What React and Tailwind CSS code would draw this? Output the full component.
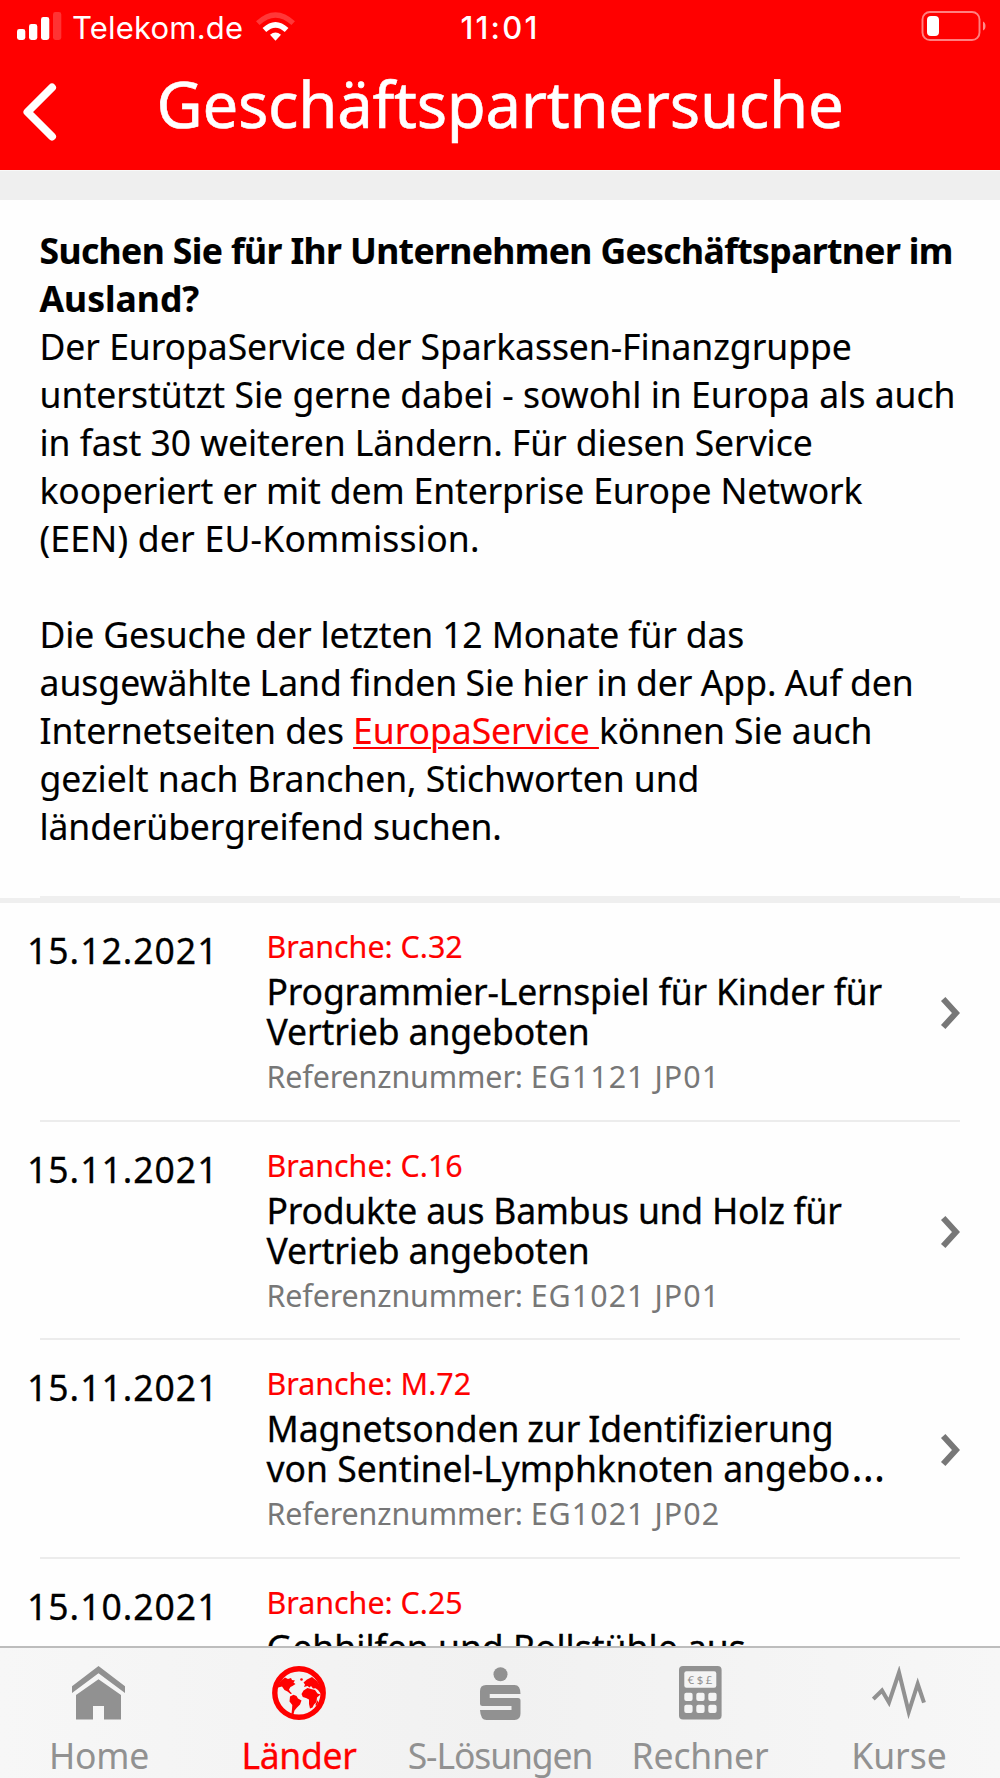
import React from "react";

const entries = [
  { date: "15.12.2021", branch: "C.32", lines: [["Programmier-Lernspiel für Kinder für", "tracking-[-0.17px]"], ["Vertrieb angeboten", "tracking-[-0.1px]"]], ref: "EG1121 JP01" },
  { date: "15.11.2021", branch: "C.16", lines: [["Produkte aus Bambus und Holz für", "tracking-[-0.23px]"], ["Vertrieb angeboten", "tracking-[-0.1px]"]], ref: "EG1021 JP01" },
  { date: "15.11.2021", branch: "M.72", lines: [["Magnetsonden zur Identifizierung", "[word-spacing:-1.5px]"], ["von Sentinel-Lymphknoten angebo", "", "…"]], ref: "EG1021 JP02" },
  { date: "15.10.2021", branch: "C.25", lines: [["Gehhilfen und Rollstühle aus", ""]] },
];

function StatusBar() {
  return (
    <div className="grid h-[46px] grid-cols-3 font-['Inter',sans-serif] text-[31px] leading-[40px] text-white">
      <div className="flex items-start pl-[17px]">
        <svg className="mt-3 h-7 w-[45px]" viewBox="0 0 45 28" fill="currentColor">
          <rect x="0" y="17" width="8.3" height="11" rx="2.4" />
          <rect x="12" y="12" width="8.3" height="16" rx="2.4" />
          <rect x="24" y="5" width="8.3" height="23" rx="2.4" />
          <rect x="36" y="0" width="8.3" height="28" rx="2.4" opacity="0.2" />
        </svg>
        <span className="mt-2 ml-[10px] w-[171px] tracking-[0.2px]">Telekom.de</span>
        <svg className="mt-3 ml-[13px] h-[29px] w-[39px] shrink-0" viewBox="0 0 39 29" fill="none" stroke="currentColor">
          <path d="M1.8 11.2Q19.5 -5.2 37.2 11.2" strokeWidth="5.2" opacity="0.22" />
          <path d="M8.4 18Q19.5 7.6 30.6 18" strokeWidth="5.4" />
          <path d="M14 22.8Q19.5 18 25 22.8L19.5 28.8Z" fill="currentColor" stroke="none" />
        </svg>
      </div>
      <div className="mt-2 text-center font-medium tracking-[2.2px]">11:01</div>
      <div className="flex items-start justify-end pr-[14px]">
        <svg className="mt-[10px] h-8 w-[66px]" viewBox="0 0 66 32" fill="none">
          <rect x="2.5" y="2" width="57" height="28" rx="7.5" stroke="white" strokeWidth="1.9" opacity="0.5" />
          <rect x="7" y="6" width="12" height="20" rx="4" fill="white" />
          <path d="M63 11.5Q65.5 12.5 65.5 16T63 20.5Z" fill="white" opacity="0.55" />
        </svg>
      </div>
    </div>
  );
}

function Header() {
  return (
    <header className="h-[170px] shrink-0 bg-[#ff0000]">
      <StatusBar />
      <div className="flex h-[124px] items-start">
        <svg className="mt-9 ml-[22px] h-[60px] w-9" viewBox="0 0 36 60" fill="none" stroke="white" strokeWidth="8" strokeLinecap="round" strokeLinejoin="round">
          <path d="M30 5.5L5.5 30L30 54.5" />
        </svg>
        <h1 className="mt-[18px] mr-[58px] flex-1 text-center text-[63.5px] leading-[80px] tracking-[-0.3px] text-white [-webkit-text-stroke:0.6px_white]">
          Geschäftspartnersuche
        </h1>
      </div>
    </header>
  );
}

function Entry({ entry }) {
  return (
    <li className="h-[218.67px] shrink-0">
      <div className="flex h-[216.67px] items-start pl-[27px]">
        <time className="mt-[27px] w-[239.5px] text-[35.5px] leading-[40px] tracking-[1px] [-webkit-text-stroke:0.3px_black]">{entry.date}</time>
        <div className="mt-[26px] w-[650px] whitespace-nowrap">
          <p className="text-[30.4px] leading-[36px] text-[#ff0000] [-webkit-text-stroke:0.2px_#ff0000]">Branche: {entry.branch}</p>
          <div className="mt-[6px] text-[35.5px] leading-[40px] [-webkit-text-stroke:0.3px_black]">
            {entry.lines.map(([text, spacing, tail]) => (
              <p key={text} className={spacing}>
                {text}
                {tail && <span className="pl-px text-[43px] leading-[0px] [-webkit-text-stroke:0px]">{tail}</span>}
              </p>
            ))}
          </div>
          {entry.ref && (
            <p className="mt-2 text-[30.4px] leading-[36px] tracking-[-0.11px] text-[#777777]">
              Referenznummer: <span className="tracking-[1.05px]">{entry.ref}</span>
            </p>
          )}
        </div>
        {entry.ref && (
          <svg className="mt-[93px] ml-[23.5px] h-[34px] w-5" viewBox="0 0 20 34" fill="none" stroke="#777777" strokeWidth="6">
            <path d="M3.2 3L16 17L3.2 31" />
          </svg>
        )}
      </div>
      <div className="mx-10 h-[2px] bg-[#ececec]" />
    </li>
  );
}

function HomeIcon() {
  return (
    <svg className="mr-[3px] h-[54px] w-[53px]" viewBox="0 0 53 54" fill="currentColor">
      <path d="M26.5 0L53 20.3V27L26.5 7.3L0 27V20.3Z" />
      <path d="M26.5 13.3L49 29V53.5H32V40H21V53.5H4V29Z" />
    </svg>
  );
}

function GlobeIcon() {
  return (
    <svg className="mr-[2px] h-[54px] w-[54px]" viewBox="0 0 54 54" fill="currentColor">
      <circle cx="27" cy="27" r="24.2" fill="none" stroke="currentColor" strokeWidth="5.4" />
      <path d="M5.5 20L9 14.5L13 11.5L16 13L19 12L20 14L23 14.5L21.5 16.5L23.5 18L20.5 20L18.5 21L17 23.5L18 25.5L20 27.5L18.5 28L15.5 25.5L12.5 24L10 20.5L6 21.5Z" />
      <path d="M18 30.5L21.5 28.8L24.5 30L26 32.5L29.5 34.5L28 38.5L25 41.5L22.5 44.5L21.5 48H19.5L20 43L20.3 39L17.5 35.5Z" />
      <path d="M31.5 24.5L35.5 22L39 23L43 24L45.5 27.5L48.5 28.5L45 31.5L44.5 36L42 38.5L40.5 41.5L38 42.5L37 38L37 33.5L34 32L30.8 31L29.5 28Z" />
      <path d="M32 21L33 18.5L31.5 16.5L35 13.5L40 11L45 15L49 21V28L46 24L43.5 22.3L41 22.5L39 20L37.5 21.5L35.5 20Z" />
      <path d="M43.5 38L46 34V37L44 40.5Z" />
      <circle cx="29.5" cy="13.5" r="1.3" />
    </svg>
  );
}

function SIcon() {
  return (
    <svg className="ml-[1px] h-[54px] w-[41px]" viewBox="0 0 41 54" fill="currentColor">
      <circle cx="20.5" cy="8.2" r="7" />
      <path d="M6 19H34.5Q40.5 19 40.5 28H9.7V32H38Q40.5 32 40.5 34.5V47.5Q40.5 54 34.5 54H6.5Q0.5 54 0 44H31.5V40H2.5Q0 40 0 37.5V25Q0 19 6 19Z" />
    </svg>
  );
}

function CalculatorIcon() {
  const columns = [5.3, 17.3, 29.3];
  return (
    <svg className="h-[54px] w-[43px]" viewBox="0 0 43 54">
      <rect width="42.6" height="53.5" rx="4" fill="#919191" />
      <rect x="5.3" y="5.3" width="32" height="16.4" rx="2.2" fill="#f4f4f4" />
      <text x="22.3" y="17.5" textAnchor="middle" fontSize="11.5" letterSpacing="2.6" fill="#919191">€$£</text>
      {[26.7, 38.7].map((y) =>
        columns.map((x) => <rect key={`${x}-${y}`} x={x} y={y} width="8.3" height="8.3" rx="2" fill="#f4f4f4" />)
      )}
    </svg>
  );
}

function ChartIcon() {
  return (
    <svg className="mr-[2px] h-[54px] w-[54px]" viewBox="0 0 54 54" fill="none" stroke="currentColor" strokeWidth="4" strokeMiterlimit="10">
      <path d="M1.3 33L10 24.5L17 36.5L27 6.5L36.7 46L45.7 18L52 36.7" />
    </svg>
  );
}

const tabs = [
  { label: "Home", Icon: HomeIcon, style: "mr-[2px] tracking-[-0.3px]" },
  { label: "Länder", Icon: GlobeIcon, style: "mr-[2px] tracking-[-0.3px] [-webkit-text-stroke:0.3px_#ff0000]" },
  { label: "S-Lösungen", Icon: SIcon, style: "tracking-[-1.1px]" },
  { label: "Rechner", Icon: CalculatorIcon, style: "tracking-[-0.1px]" },
  { label: "Kurse", Icon: ChartIcon, style: "mr-[2px]" },
];

function TabBar() {
  return (
    <nav className="grid h-[132px] shrink-0 grid-cols-5 border-t-2 border-[#bdbdbd] bg-linear-to-r from-[#f7f7f7] via-[#f1f1f1] to-[#f7f7f7]">
      {tabs.map(({ label, Icon, style }) => (
        <div key={label} className={label === "Länder" ? "flex flex-col items-center pt-[18px] text-[#ff0000]" : "flex flex-col items-center pt-[18px] text-[#919191]"}>
          <Icon />
          <span className={`mt-[15px] text-[35.5px] leading-[40px] ${style}`}>{label}</span>
        </div>
      ))}
    </nav>
  );
}

export default function App() {
  return (
    <div className="flex h-[1778px] w-[1000px] flex-col overflow-hidden bg-[#fefefe] font-['Noto_Sans',sans-serif] text-black">
      <Header />
      <div className="h-[30px] shrink-0 border-t border-[#f8f8f8] bg-[#efefef]" />
      <main className="flex min-h-0 flex-1 flex-col overflow-hidden">
        <section className="h-[696px] shrink-0 pt-[26px] pl-[39.5px] text-[35.5px] leading-[48px] whitespace-nowrap [-webkit-text-stroke:0.15px]">
          <h2 className="font-bold">
            <span className="block tracking-[-0.61px]">Suchen Sie für Ihr Unternehmen Geschäftspartner im</span>
            <span className="block">Ausland?</span>
          </h2>
          <p>
            <span className="block tracking-[-0.05px]">Der EuropaService der Sparkassen-Finanzgruppe</span>
            <span className="block tracking-[0.02px]">unterstützt Sie gerne dabei - sowohl in Europa als auch</span>
            <span className="block tracking-[-0.06px]">in fast 30 weiteren Ländern. Für diesen Service</span>
            <span className="block tracking-[-0.13px]">kooperiert er mit dem Enterprise Europe Network</span>
            <span className="block tracking-[0.22px]">(EEN) der EU-Kommission.</span>
          </p>
          <p className="mt-12">
            <span className="block tracking-[-0.13px]">Die Gesuche der letzten 12 Monate für das</span>
            <span className="block [word-spacing:-0.95px]">ausgewählte Land finden Sie hier in der App. Auf den</span>
            <span className="block tracking-[-0.05px]">
              Internetseiten des{" "}
              <a className="text-[#ff0000] underline decoration-2 underline-offset-[3px] whitespace-pre">EuropaService </a>
              können Sie auch
            </span>
            <span className="block tracking-[-0.04px]">gezielt nach Branchen, Stichworten und</span>
            <span className="block tracking-[-0.12px]">länderübergreifend suchen.</span>
          </p>
        </section>
        <div className="mx-10 h-[2px] shrink-0 bg-[#efefef]" />
        <div className="h-[5px] shrink-0 bg-[#efefef]" />
        <ul className="flex flex-col">
          {entries.map((entry, index) => (
            <Entry key={index} entry={entry} />
          ))}
        </ul>
      </main>
      <TabBar />
    </div>
  );
}
